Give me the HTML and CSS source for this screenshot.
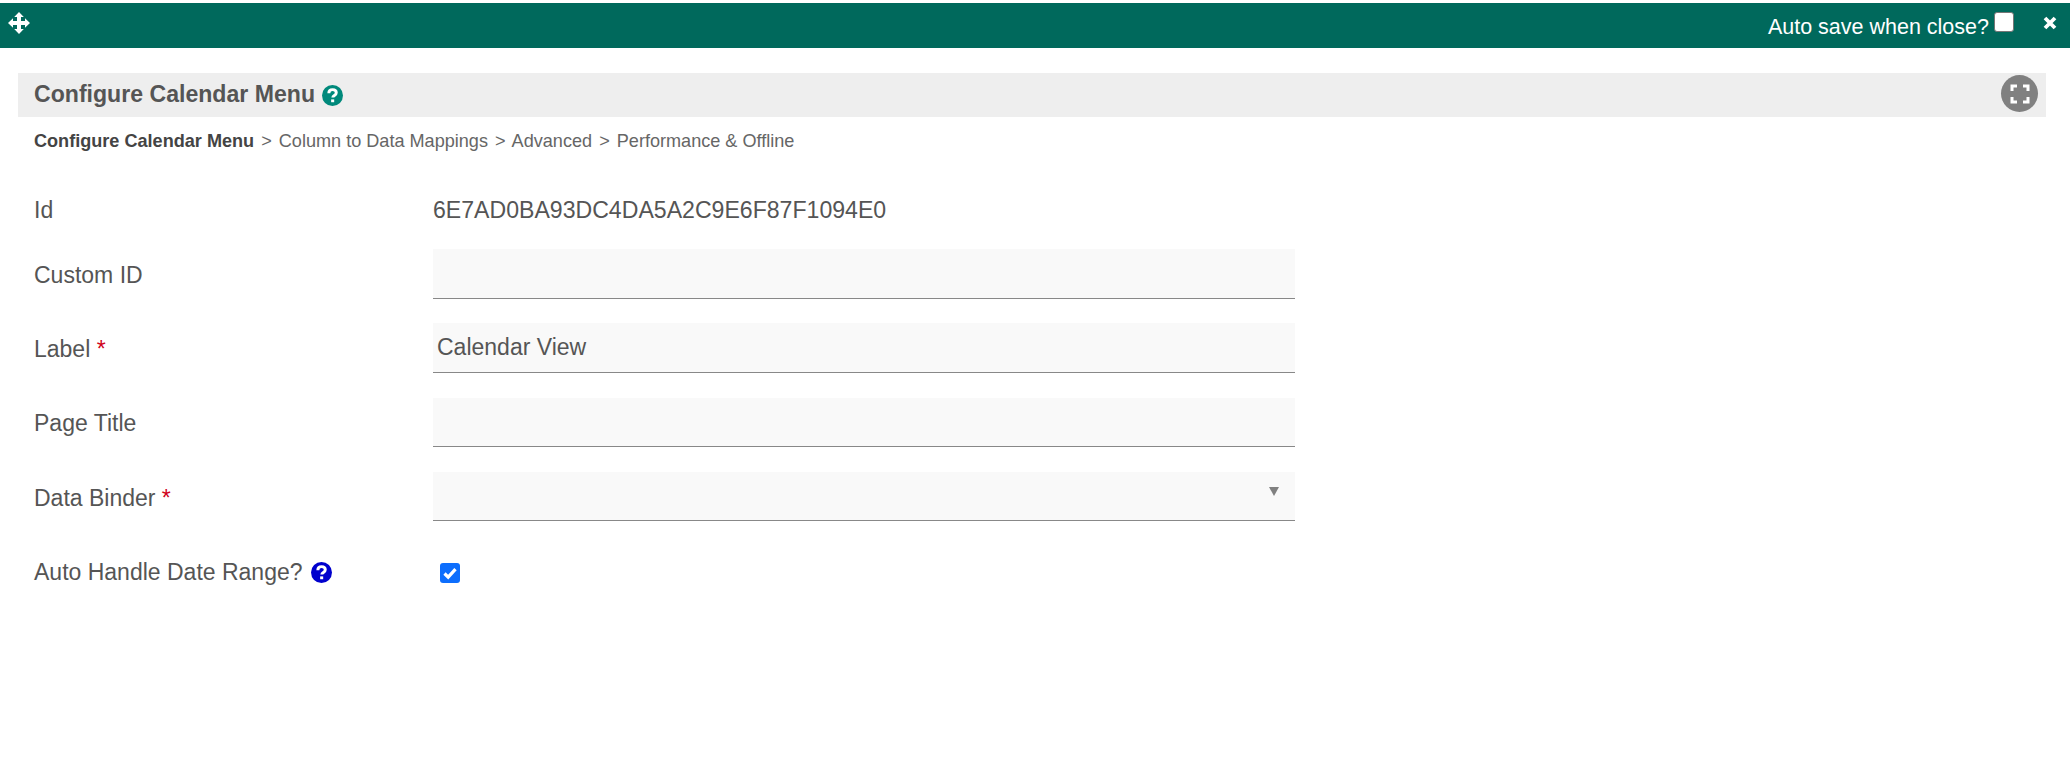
FILE: index.html
```html
<!DOCTYPE html>
<html lang="en">
<head>
    <meta charset="UTF-8">
    <title>Configure Calendar Menu</title>
    <link rel="stylesheet" href="styles.css">
</head>
<body>
<header class="topbar">
    <svg class="topbar__move" viewBox="0 0 24 24" width="24" height="24">
        <path fill="#fff" d="M12 1l4.800 5H14v4h4V7.200L23 12l-5 4.800V14h-4v4h2.800L12 23l-4.800-5H10v-4H6v2.800L1 12l5-4.800V10h4V6H7.200z"/>
    </svg>
    <div class="topbar__right">
        <label class="autosave">Auto save when close?<span class="autosave__box"></span></label>
        <svg class="topbar__close" viewBox="0 0 16 16" width="16" height="16">
            <path d="M3 3l10 10M13 3L3 13" stroke="#fff" stroke-width="3.800" fill="none"/>
        </svg>
    </div>
</header>

<main class="content">
    <div class="title">
        <h1 class="title__text">Configure Calendar Menu</h1>
        <svg class="help" viewBox="0 0 20 20" width="21" height="21">
            <circle cx="10" cy="10" r="10" fill="#00897b"/>
            <path d="M6.500 7.800c0-2.200 1.600-3.400 3.600-3.400s3.500 1.200 3.500 3c0 2.600-3.300 2.500-3.300 4.500" fill="none" stroke="#fff" stroke-width="2.800"/>
            <rect x="8.700" y="13.700" width="2.900" height="2.700" fill="#fff"/>
        </svg>
        <span class="title__expand">
            <svg viewBox="0 0 20 20" width="20" height="20">
                <path d="M2 7V2h5M13 2h5v5M18 13v5h-5M7 18H2v-5" fill="none" stroke="#fff" stroke-width="3"/>
            </svg>
        </span>
    </div>

    <nav class="steps">
        <strong>Configure Calendar Menu</strong>
        <span class="steps__sep">&gt;</span> Column to Data Mappings
        <span class="steps__sep">&gt;</span> Advanced
        <span class="steps__sep">&gt;</span> Performance &amp; Offline
    </nav>

    <form class="form">
        <div class="form__row form__row--id">
            <span class="form__label">Id</span>
            <span class="form__value">6E7AD0BA93DC4DA5A2C9E6F87F1094E0</span>
        </div>
        <div class="form__row">
            <span class="form__label">Custom ID</span>
            <div class="field"></div>
        </div>
        <div class="form__row">
            <span class="form__label">Label <span class="req">*</span></span>
            <div class="field">Calendar View</div>
        </div>
        <div class="form__row">
            <span class="form__label">Page Title</span>
            <div class="field"></div>
        </div>
        <div class="form__row">
            <span class="form__label">Data Binder <span class="req">*</span></span>
            <div class="field field--select"><span class="field__arrow"></span></div>
        </div>
        <div class="form__row form__row--check">
            <span class="form__label">Auto Handle Date Range?
                <svg class="help help--blue" viewBox="0 0 20 20" width="21" height="21">
                    <circle cx="10" cy="10" r="10" fill="#0000cd"/>
                    <path d="M6.500 7.800c0-2.200 1.600-3.400 3.600-3.400s3.500 1.200 3.500 3c0 2.600-3.300 2.500-3.300 4.500" fill="none" stroke="#fff" stroke-width="2.800"/>
                    <rect x="8.700" y="13.700" width="2.900" height="2.700" fill="#fff"/>
                </svg>
            </span>
            <span class="check">
                <svg viewBox="0 0 20 20" width="20" height="20">
                    <path d="M4.500 10.500l3.700 3.700 7.300-8" fill="none" stroke="#fff" stroke-width="3.200"/>
                </svg>
            </span>
        </div>
    </form>
</main>
</body>
</html>
```

FILE: styles.css
```css
* {
    margin: 0;
    padding: 0;
    box-sizing: border-box;
}

body {
    background: #fff;
    font-family: "Liberation Sans", Arial, sans-serif;
    color: #555;
    padding-top: 3px;
}

.topbar {
    display: flex;
    justify-content: space-between;
    align-items: center;
    height: 45px;
    padding: 0 12px 0 7px;
    background: #00695c;
    color: #fff;
}

.topbar__move {
    margin-top: -5px;
}

.topbar__right {
    display: flex;
    align-items: center;
}

.autosave {
    display: flex;
    align-items: center;
    margin-top: 3px;
    font-size: 21.500px;
}

.autosave__box {
    width: 20px;
    height: 20px;
    margin: -11px 0 0 5px;
    background: #fff;
    border: 1px solid #767676;
    border-radius: 3px;
}

.topbar__close {
    margin: -6px 0 0 28px;
}

.content {
    padding: 25px 24px 0 18px;
}

.title {
    display: flex;
    align-items: center;
    height: 44px;
    padding: 0 8px 0 16px;
    background: #eee;
}

.title__text {
    margin-top: -2px;
    font-size: 23.100px;
    font-weight: bold;
    color: #555;
}

.help {
    margin-left: 7px;
    vertical-align: -3px;
}

.help--blue {
    margin-left: 2px;
}

.title__expand {
    display: flex;
    align-items: center;
    justify-content: center;
    width: 37px;
    height: 37px;
    margin: -3px 0 0 auto;
    background: #808080;
    border-radius: 50%;
}

.steps {
    margin: 14px 0 0 16px;
    font-size: 18.100px;
    line-height: 20px;
    color: #666;
}

.steps strong {
    color: #444;
}

.steps__sep {
    margin: 0 2px;
}

.form {
    margin: 44px 0 0 16px;
}

.form__row {
    display: flex;
    align-items: center;
    height: 49.500px;
    margin-bottom: 24.830px;
}

.form__row--id {
    height: 30px;
    margin-bottom: 24px;
}

.form__row--check {
    height: 49px;
    margin-top: 26.700px;
}

.form__label {
    width: 399px;
    flex: none;
    padding-top: 3px;
    font-size: 23px;
    color: #555;
}

.form__row--id .form__label {
    padding-top: 0;
}

.form__row--check .form__label {
    padding-top: 0;
}

.form__value {
    font-size: 23.100px;
    color: #555;
}

.req {
    color: #d0021b;
}

.field {
    position: relative;
    width: 862px;
    height: 100%;
    padding: 8px 4px 0;
    background: #f9f9f9;
    border-bottom: 1px solid #888;
    font-size: 23px;
    line-height: 33px;
    color: #555;
}

.field__arrow {
    position: absolute;
    top: 15px;
    right: 16px;
    border-left: 5px solid transparent;
    border-right: 5px solid transparent;
    border-top: 9px solid #808080;
}

.check {
    display: flex;
    width: 20px;
    height: 20px;
    margin-left: 7px;
    background: #0d6efd;
    border-radius: 3px;
}
```
